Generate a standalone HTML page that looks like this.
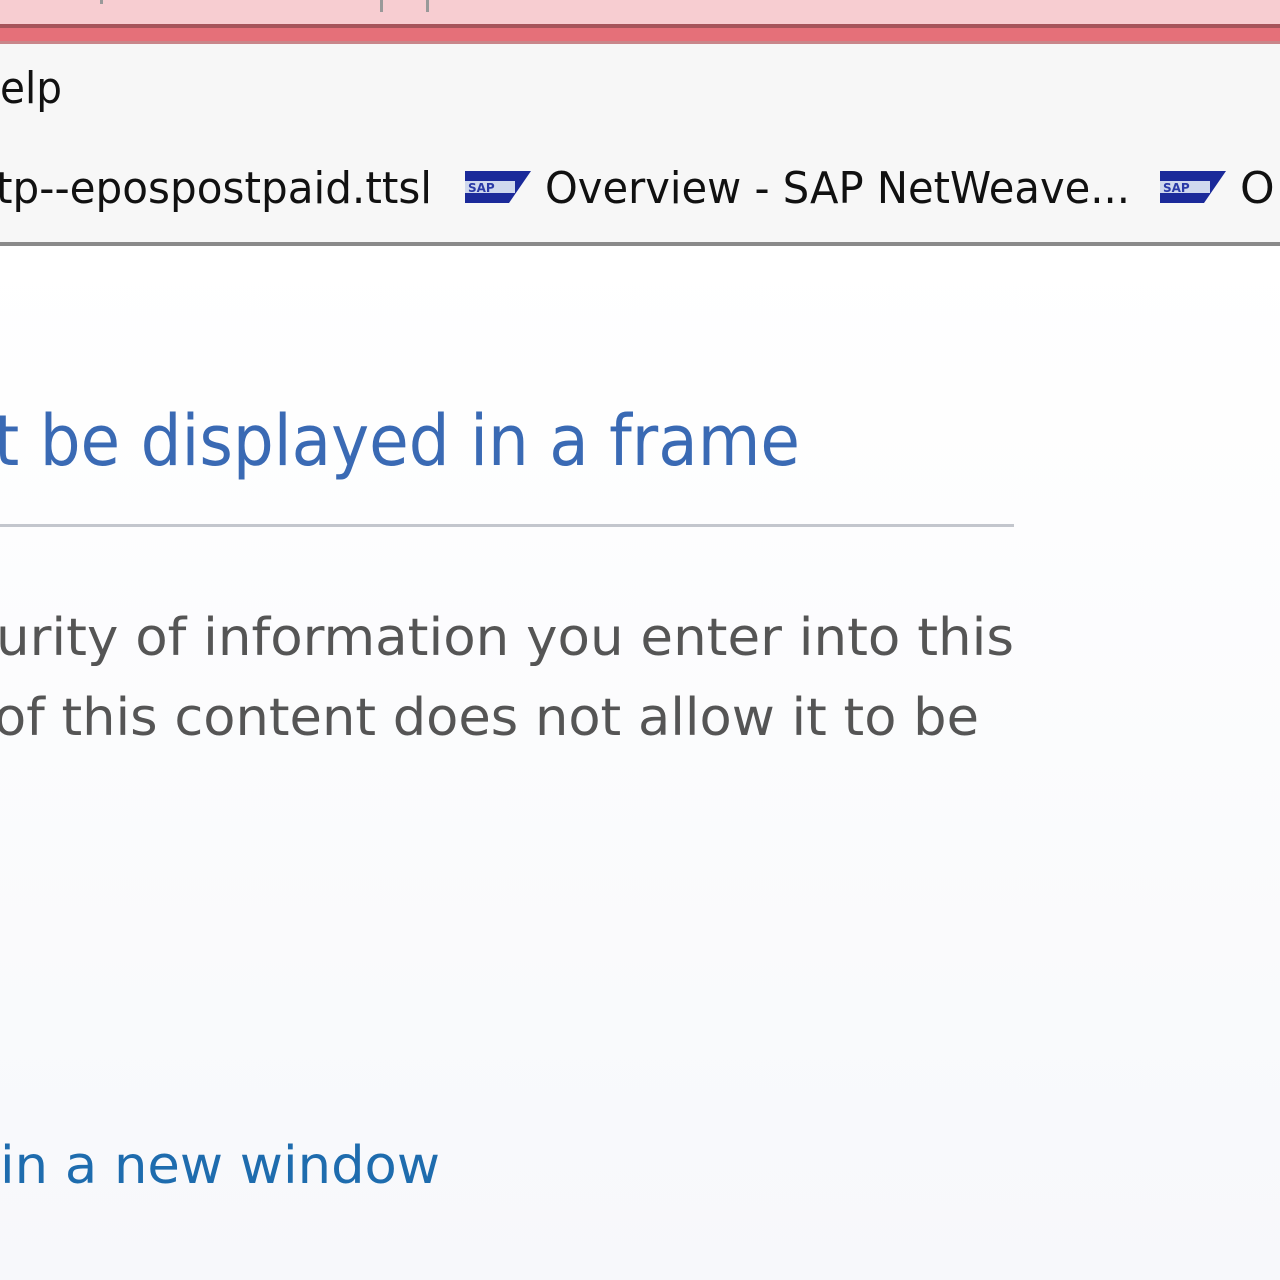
<!DOCTYPE html>
<html><head><meta charset="utf-8"><style>
html,body{margin:0;padding:0;width:1280px;height:1280px;overflow:hidden;background:#fff}
svg{display:block}
</style></head><body>
<svg width="1280" height="1280" viewBox="0 0 1280 1280" xmlns="http://www.w3.org/2000/svg">
<defs><linearGradient id="g" x1="0" y1="0" x2="0" y2="1"><stop offset="0" stop-color="#ffffff"/><stop offset="1" stop-color="#f7f8fb"/></linearGradient></defs>
<rect x="0" y="246" width="1280" height="1034" fill="url(#g)"/>
<rect x="0" y="0" width="1280" height="24" fill="#f7cdd1"/>
<rect x="100" y="0" width="3" height="4" fill="#999"/>
<rect x="380" y="0" width="3" height="12" fill="#999"/>
<rect x="426" y="0" width="3" height="12" fill="#999"/>
<rect x="0" y="24" width="1280" height="4" fill="#a6545a"/>
<rect x="0" y="28" width="1280" height="13" fill="#e57079"/>
<rect x="0" y="41" width="1280" height="3" fill="#c9868a"/>
<rect x="0" y="44" width="1280" height="198" fill="#f7f7f7"/>
<rect x="0" y="242" width="1280" height="4" fill="#8a8a8a"/>
<g font-family="DejaVu Sans, Liberation Sans, sans-serif">
<text x="0" y="103" font-size="44" fill="#111" textLength="62" lengthAdjust="spacingAndGlyphs">elp</text>
<text x="-4" y="203" font-size="44" fill="#111" textLength="436" lengthAdjust="spacingAndGlyphs">tp--epospostpaid.ttsl</text>
<g transform="translate(465,171)">
<polygon points="0,0 66,0 44,32 0,32" fill="#1b2a9a"/>
<rect x="0" y="10" width="50" height="12" fill="#cfd8ee"/>
<text x="3" y="21" font-size="12" font-weight="bold" fill="#2a3aa8">SAP</text>
</g>
<text x="545" y="203" font-size="44" fill="#111" textLength="585" lengthAdjust="spacingAndGlyphs">Overview - SAP NetWeave...</text>
<g transform="translate(1160,171)">
<polygon points="0,0 66,0 44,32 0,32" fill="#1b2a9a"/>
<rect x="0" y="10" width="50" height="12" fill="#cfd8ee"/>
<text x="3" y="21" font-size="12" font-weight="bold" fill="#2a3aa8">SAP</text>
</g>
<text x="1240" y="203" font-size="44" fill="#111">O</text>
<text x="-6" y="465" font-size="70" fill="#3a6ab4" textLength="806" lengthAdjust="spacingAndGlyphs">t be displayed in a frame</text>
<rect x="0" y="524" width="1014" height="3" fill="#c3c6cd"/>
<text x="-4" y="655" font-size="52" fill="#555" textLength="1018" lengthAdjust="spacingAndGlyphs">urity of information you enter into this</text>
<text x="-6" y="735" font-size="52" fill="#555" textLength="985" lengthAdjust="spacingAndGlyphs">of this content does not allow it to be</text>
<text x="0" y="1183" font-size="52" fill="#1e6cae" textLength="440" lengthAdjust="spacingAndGlyphs">in a new window</text>
</g>
</svg>
</body></html>
